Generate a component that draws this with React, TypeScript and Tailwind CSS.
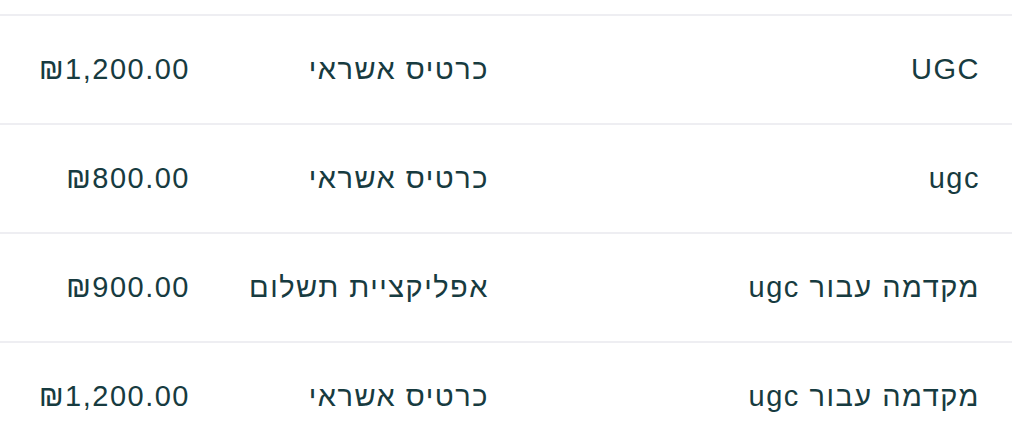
import React from "react";

const rows = [
  { name: "UGC", method: "כרטיס אשראי", amount: "₪1,200.00" },
  { name: "ugc", method: "כרטיס אשראי", amount: "₪800.00" },
  { name: "מקדמה עבור ugc", method: "אפליקציית תשלום", amount: "₪900.00" },
  { name: "מקדמה עבור ugc", method: "כרטיס אשראי", amount: "₪1,200.00" },
];

export default function App() {
  return (
    <div
      dir="rtl"
      className="w-[1012px] h-[442px] overflow-hidden bg-white text-[#173b40]"
      style={{ fontFamily: '"Liberation Sans", Arial, sans-serif' }}
    >
      <div className="h-[16px] border-b-2 border-[#eeeef2]" />
      {rows.map((r, i) => (
        <div
          key={i}
          className="grid grid-cols-[491px_299px_222px] h-[109px] items-center border-b-2 border-[#eeeef2] text-[29px] tracking-[1.5px]"
        >
          <div className="pr-[32px]">{r.name}</div>
          <div className="pr-[32px]">{r.method}</div>
          <div className="pr-[32px]">{r.amount}</div>
        </div>
      ))}
    </div>
  );
}
